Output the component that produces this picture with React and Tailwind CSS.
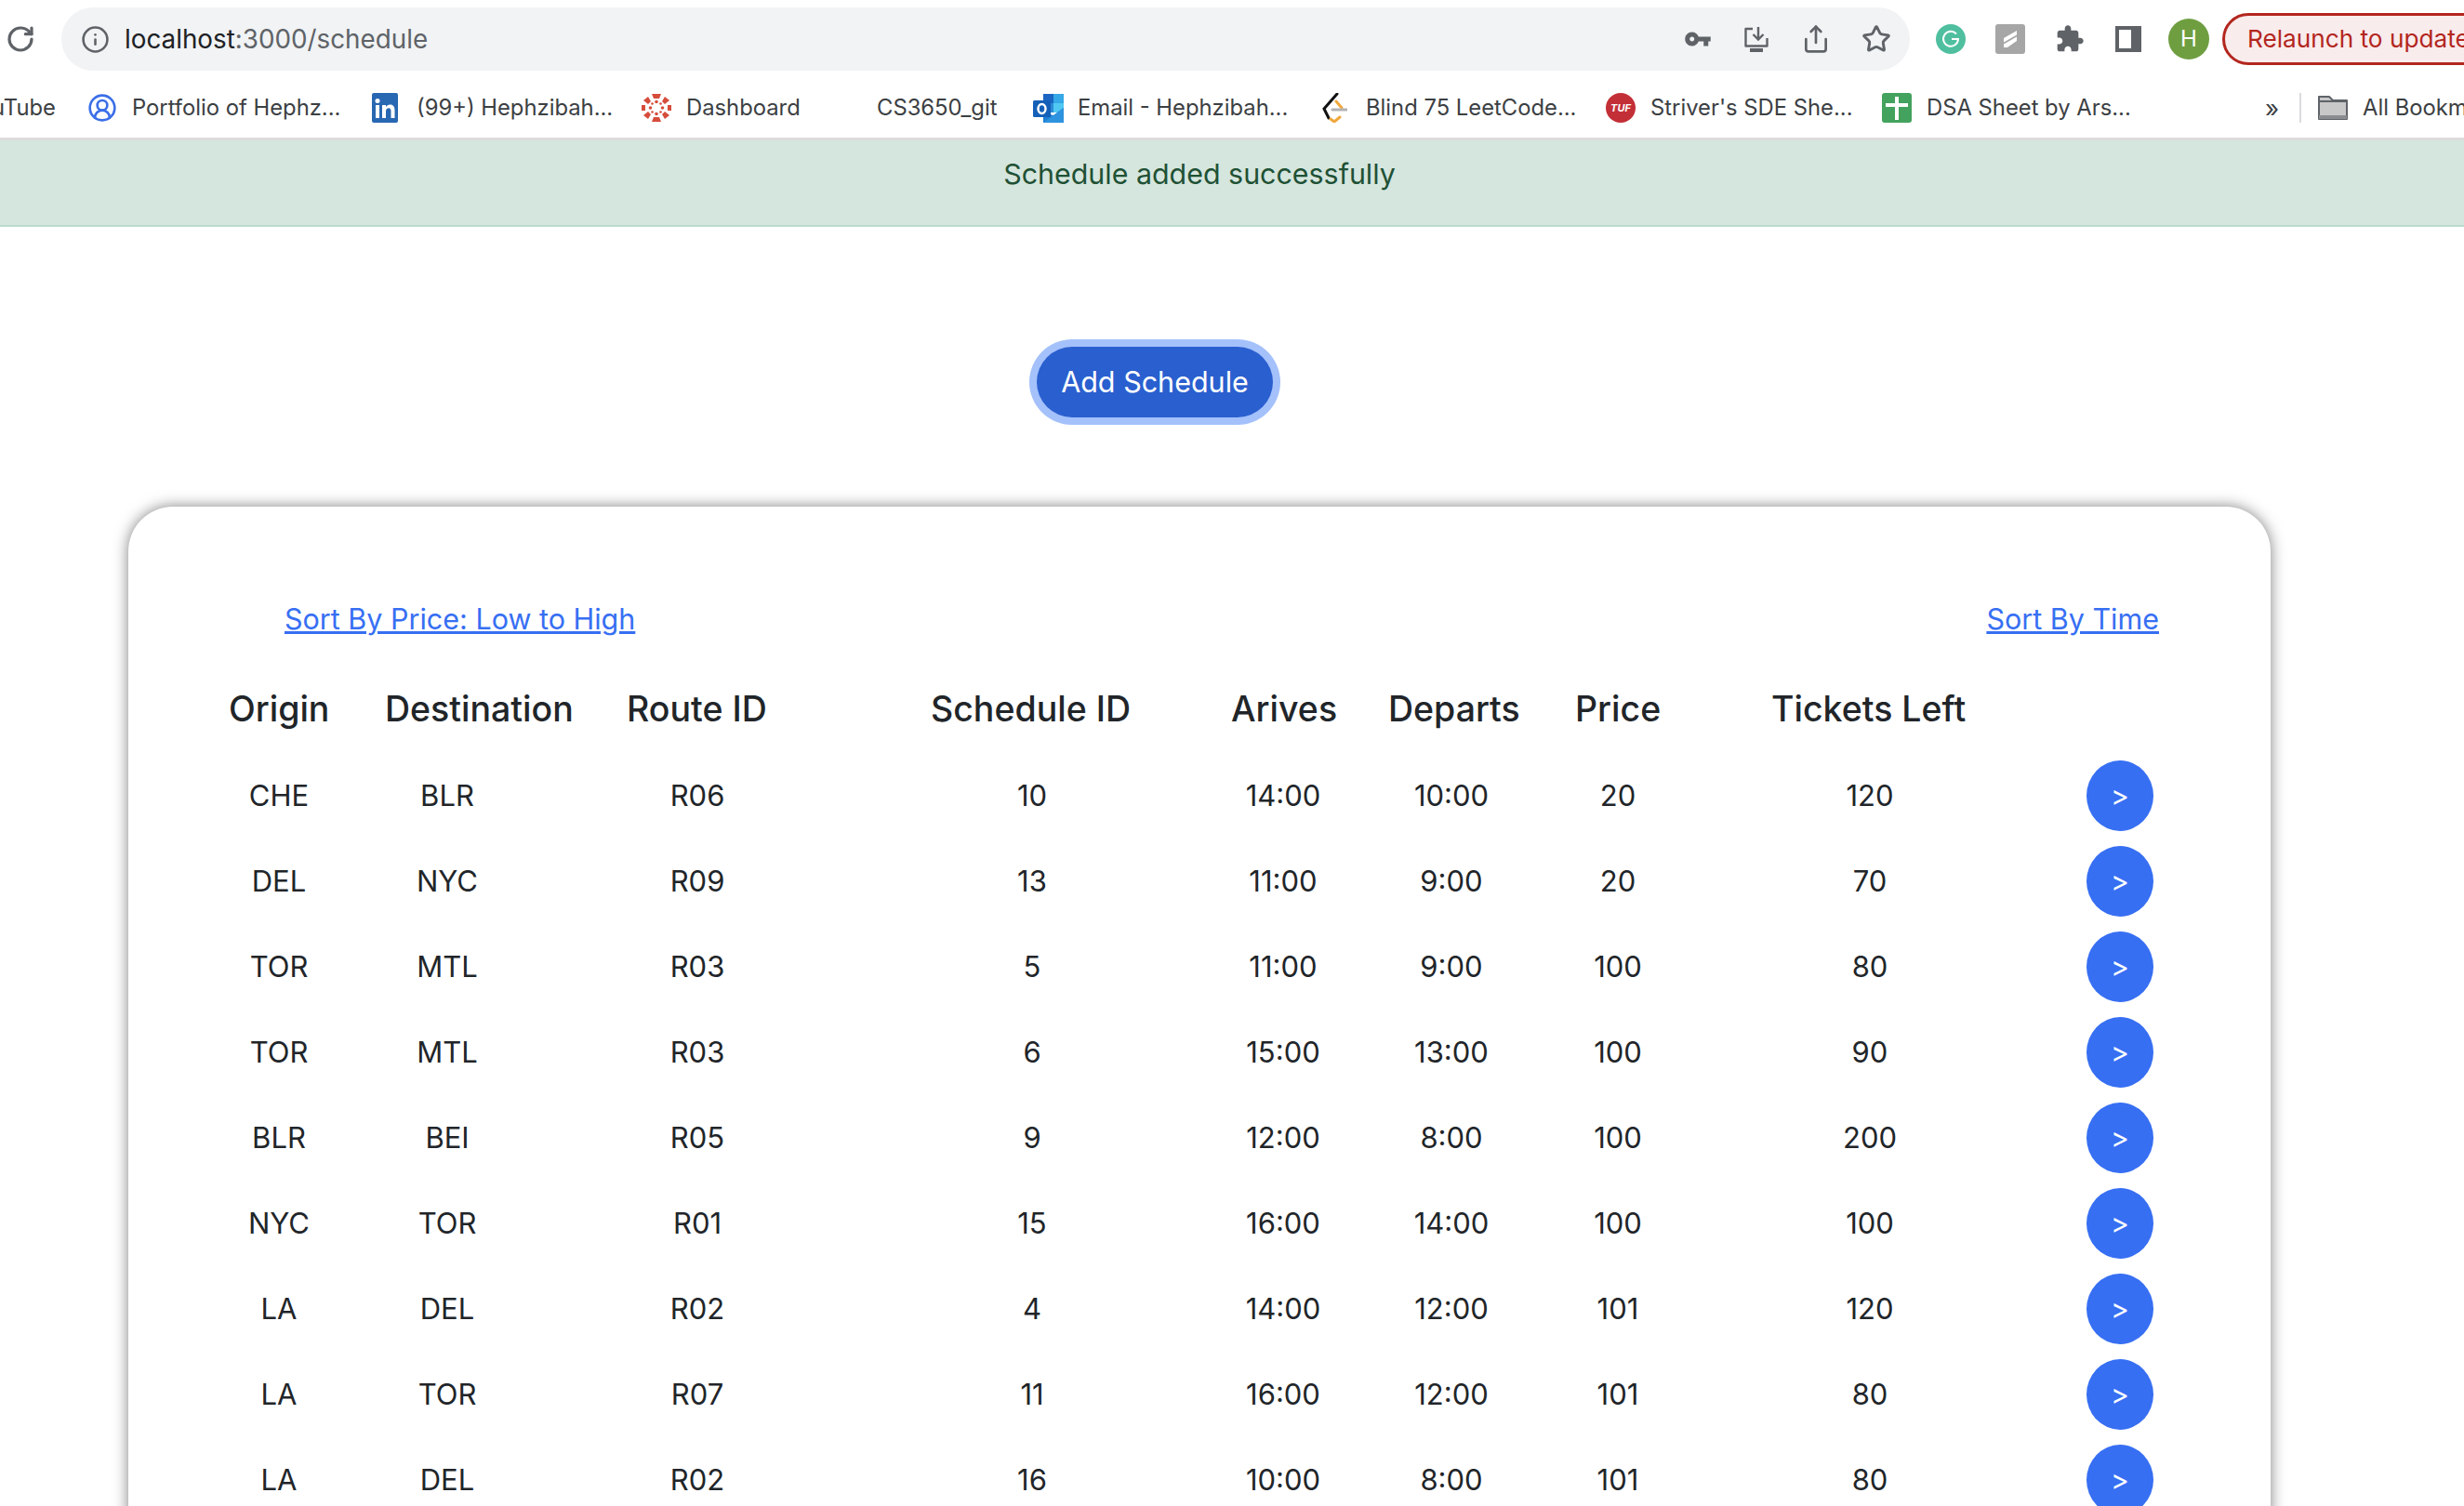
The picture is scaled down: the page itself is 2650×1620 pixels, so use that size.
import React from 'react';
import { RotateCw, Info, Star, Share, CircleUserRound } from 'lucide-react';

const schedules = [
    ['CHE', 'BLR', 'R06', '10', '14:00', '10:00', '20', '120'],
    ['DEL', 'NYC', 'R09', '13', '11:00', '9:00', '20', '70'],
    ['TOR', 'MTL', 'R03', '5', '11:00', '9:00', '100', '80'],
    ['TOR', 'MTL', 'R03', '6', '15:00', '13:00', '100', '90'],
    ['BLR', 'BEI', 'R05', '9', '12:00', '8:00', '100', '200'],
    ['NYC', 'TOR', 'R01', '15', '16:00', '14:00', '100', '100'],
    ['LA', 'DEL', 'R02', '4', '14:00', '12:00', '101', '120'],
    ['LA', 'TOR', 'R07', '11', '16:00', '12:00', '101', '80'],
    ['LA', 'DEL', 'R02', '16', '10:00', '8:00', '101', '80'],
];

const headers = [
    ['Origin', 'w-[168px]'],
    ['Destination', 'w-[260px]'],
    ['Route ID', 'w-[327px]'],
    ['Schedule ID', 'w-[323px]'],
    ['Arives', 'w-[169px]'],
    ['Departs', 'w-[201px]'],
    ['Price', 'w-[211px]'],
    ['Tickets Left', 'w-[220px]'],
];

const gridCols = 'grid grid-cols-[162px_200px_338px_382px_158px_204px_154px_388px_150px] items-center';

const KeyIcon = () => (
    <svg width="30" height="30" viewBox="0 0 24 24" fill="#5f6368">
        <path d="M12.65 10C11.83 7.67 9.61 6 7 6c-3.31 0-6 2.69-6 6s2.69 6 6 6c2.61 0 4.83-1.67 5.65-4H17v4h4v-4h2v-4H12.65zM7 14c-1.1 0-2-.9-2-2s.9-2 2-2 2 .9 2 2-.9 2-2 2z" />
    </svg>
);

const InstallIcon = () => (
    <svg width="30" height="30" viewBox="0 0 30 30" fill="none" stroke="#5f6368" strokeWidth="2.4">
        <path d="M11 4H3.500v18.500h23V14" strokeLinejoin="round" />
        <path d="M17 2v13M11.500 10l5.500 5.500 5.500-5.500" />
        <path d="M8 27h14" strokeWidth="4" />
    </svg>
);

const PuzzleIcon = () => (
    <svg width="32" height="32" viewBox="0 0 24 24" fill="#5f6368">
        <path d="M20.5 11H19V7c0-1.1-.9-2-2-2h-4V3.5C13 2.12 11.88 1 10.5 1S8 2.12 8 3.5V5H4c-1.1 0-1.99.9-1.99 2v3.8H3.5c1.49 0 2.7 1.21 2.7 2.7s-1.21 2.7-2.7 2.7H2V20c0 1.1.9 2 2 2h3.8v-1.5c0-1.49 1.21-2.7 2.7-2.7 1.49 0 2.7 1.21 2.7 2.7V22H17c1.1 0 2-.9 2-2v-4h1.5c1.38 0 2.5-1.12 2.5-2.5S21.88 11 20.5 11z" />
    </svg>
);

const GrammarlyIcon = () => (
    <svg width="32" height="32" viewBox="0 0 32 32">
        <circle cx="16" cy="16" r="16" fill="#4fbf9f" />
        <path d="M22 10.500A8 8 0 1 0 24 16h-7" fill="none" stroke="#fff" strokeWidth="2" />
    </svg>
);

const SlashIcon = () => (
    <svg width="32" height="32" viewBox="0 0 32 32">
        <rect width="32" height="32" rx="3" fill="#a6a6a6" />
        <path d="M9 15 23 7v4.500L9 19.500zM9 21.500 23 13.500V18L13 25 9 25z" fill="#fff" />
    </svg>
);

const LinkedinIcon = () => (
    <svg width="28" height="32" viewBox="0 0 28 32">
        <rect width="28" height="32" rx="2" fill="#2867b2" />
        <rect x="4" y="13" width="4" height="14" fill="#fff" />
        <circle cx="6" cy="8.500" r="2.500" fill="#fff" />
        <path d="M11 13h4v2c1-1.500 2.500-2.400 4.500-2.400 3.500 0 5 2.400 5 6V27h-4v-7.500c0-2-.7-3.300-2.500-3.300S15 17.500 15 19.500V27h-4z" fill="#fff" />
    </svg>
);

const CanvasIcon = () => (
    <svg width="32" height="32" viewBox="0 0 32 32" fill="#d64c3b">
        <path d="M11 1h10l-2 5h-6zM11 31h10l-2-5h-6z" />
        <path d="M2 8l5-4 3 5-3 3zM30 8l-5-4-3 5 3 3zM2 24l5 4 3-5-3-3zM30 24l-5 4-3-5 3-3z" />
        <rect x="0" y="13" width="4" height="6" />
        <rect x="28" y="13" width="4" height="6" />
        <circle cx="9.500" cy="16" r="1.800" />
        <circle cx="22.500" cy="16" r="1.800" />
        <circle cx="16" cy="9.500" r="1.800" />
        <circle cx="16" cy="22.500" r="1.800" />
        <circle cx="11.500" cy="11.500" r="1.300" />
        <circle cx="20.500" cy="11.500" r="1.300" />
        <circle cx="11.500" cy="20.500" r="1.300" />
        <circle cx="20.500" cy="20.500" r="1.300" />
    </svg>
);

const OutlookIcon = () => (
    <svg width="34" height="32" viewBox="0 0 34 32">
        <rect x="11" y="1" width="22" height="10" fill="#1a66c2" />
        <rect x="22" y="1" width="11" height="10" fill="#35a8e8" />
        <rect x="11" y="11" width="11" height="10" fill="#2a8bd8" />
        <rect x="22" y="11" width="11" height="10" fill="#50c8f2" />
        <path d="M11 21l11 3 11-8v16H11z" fill="#1f7fd4" />
        <path d="M11 32l22-16v16z" fill="#2e93de" />
        <rect x="0" y="8" width="19" height="18" rx="1.500" fill="#1460b8" />
        <ellipse cx="9.500" cy="17" rx="4" ry="5" fill="none" stroke="#fff" strokeWidth="2.500" />
    </svg>
);

const LeetcodeIcon = () => (
    <svg width="28" height="32" viewBox="0 0 28 32" fill="none" strokeLinecap="round">
        <path d="M17 1 3 17l5 10" stroke="#111" strokeWidth="3" />
        <path d="M16 9l6 7M10 28l4 3 6-5" stroke="#f0a83c" strokeWidth="3" />
        <path d="M12 18h15" stroke="#b3b3b3" strokeWidth="3" />
    </svg>
);

const TufIcon = () => (
    <div className="w-[32px] h-[32px] rounded-full bg-[#c32f37] flex items-center justify-center text-white text-[11px] font-bold italic">TUF</div>
);

const SheetIcon = () => (
    <svg width="32" height="32" viewBox="0 0 32 32">
        <rect width="32" height="32" rx="3" fill="#43a25d" />
        <path d="M14 4h4v7h10v4H18v14h-4V15H4v-4h10z" fill="#fff" />
    </svg>
);

const FolderIcon = () => (
    <svg width="32" height="26" viewBox="0 0 32 26">
        <path d="M1 25V1h11l4 4h15v20z" fill="#c8c8c8" stroke="#5f6368" strokeWidth="2" strokeLinejoin="round" />
        <path d="M1 6h30" stroke="#5f6368" strokeWidth="2" />
        <path d="M1 21h30v4H1z" fill="#8a8c8f" />
    </svg>
);

const Bookmark = ({ icon, label, className }) => (
    <div className={`flex items-center shrink-0 ${className}`}>
        <div className="w-[48px] h-[32px] shrink-0 flex items-center">{icon}</div>
        <span className="whitespace-nowrap">{label}</span>
    </div>
);

const App = () => {
    return (
        <div className="w-[2650px] h-[1620px] overflow-hidden bg-white font-['Inter',sans-serif] text-[#212529]">
            <div className="h-[84px] flex items-center">
                <div className="w-[66px] shrink-0 flex justify-center pr-[22px]">
                    <RotateCw size={32} color="#5f6368" strokeWidth={2.4} />
                </div>
                <div className="w-[1988px] h-[68px] shrink-0 rounded-full bg-[#f1f3f4] flex items-center pl-[21px] pr-[20px]">
                    <Info size={31} color="#5f6368" strokeWidth={2} />
                    <div className="ml-[16px] pt-[1px] text-[27.8px] text-[#5f6368] whitespace-nowrap"><span className="text-[#202124]">localhost</span>:3000/schedule</div>
                    <div className="ml-auto flex items-center gap-[33px]">
                        <KeyIcon />
                        <InstallIcon />
                        <Share size={32} color="#5f6368" strokeWidth={2} />
                        <Star size={32} color="#5f6368" strokeWidth={2.2} />
                    </div>
                </div>
                <div className="ml-[28px] flex items-center gap-[32px] shrink-0">
                    <GrammarlyIcon />
                    <SlashIcon />
                    <PuzzleIcon />
                    <div className="w-[28px] h-[28px] border-[4px] border-r-[11px] border-[#5f6368] ml-[1px]" />
                </div>
                <div className="ml-[29px] w-[44px] h-[44px] shrink-0 rounded-full bg-[#6f9e41] flex items-center justify-center text-white text-[24px]">H</div>
                <div className="ml-[14px] h-[56px] w-[320px] shrink-0 rounded-full border-[3px] border-[#b3261e] bg-[#f9ecec] text-[#b3261e] text-[26.2px] flex items-center pl-[24px] whitespace-nowrap">Relaunch to update</div>
            </div>

            <div className="h-[67px] border-b-[3px] border-[#dcdcdc] flex items-center text-[23.8px] text-[#3c4043] overflow-hidden">
                <div className="w-[94px] shrink-0 overflow-hidden flex justify-end pr-[34px]"><span className="whitespace-nowrap">YouTube</span></div>
                <Bookmark className="w-[306px]" icon={<CircleUserRound size={32} color="#3b6fe8" strokeWidth={2} />} label="Portfolio of Hephz..." />
                <Bookmark className="w-[290px]" icon={<LinkedinIcon />} label="(99+) Hephzibah..." />
                <Bookmark className="w-[205px]" icon={<CanvasIcon />} label="Dashboard" />
                <Bookmark className="w-[216px]" icon={null} label="CS3650_git" />
                <Bookmark className="w-[310px]" icon={<OutlookIcon />} label="Email - Hephzibah..." />
                <Bookmark className="w-[306px]" icon={<LeetcodeIcon />} label="Blind 75 LeetCode..." />
                <Bookmark className="w-[297px]" icon={<TufIcon />} label="Striver's SDE She..." />
                <Bookmark className="w-[412px]" icon={<SheetIcon />} label="DSA Sheet by Ars..." />
                <span className="w-[37px] shrink-0 text-[26px]">»</span>
                <div className="w-[2px] h-[32px] bg-[#dadce0] shrink-0" />
                <div className="ml-[18px] w-[48px] shrink-0"><FolderIcon /></div>
                <span className="whitespace-nowrap">All Bookmarks</span>
            </div>

            <div className="h-[93px] border-b-2 border-[#badbcc] bg-[#d5e6de] flex justify-center pt-[20px] pr-[70px] text-[30.4px] leading-[32px] text-[#1f5135]">
                Schedule added successfully
            </div>

            <div className="mt-[129px] flex justify-center pr-[166px]">
                <button className="w-[254px] h-[76px] rounded-full bg-[#2a5fcf] ring-8 ring-[#a4c1fb] text-white text-[30.5px]">Add Schedule</button>
            </div>

            <div className="mt-[96px] ml-[138px] w-[2304px] rounded-[48px] bg-white shadow-[0_0_16px_rgba(0,0,0,0.5)] pt-[97px] pb-[40px]">
                <div className="flex justify-between pl-[168px] pr-[120px] text-[30.5px] leading-[48px] text-[#376ff3]">
                    <a className="underline">Sort By Price: Low to High</a>
                    <a className="underline">Sort By Time</a>
                </div>

                <div className="flex items-center mt-[43px] ml-[108px] h-[60px] text-[37.5px] font-medium whitespace-nowrap">
                    {headers.map(([label, width]) => (
                        <div key={label} className={`shrink-0 ${width}`}>{label}</div>
                    ))}
                </div>

                <div className="mt-[25px] ml-[81px] flex flex-col gap-4">
                    {schedules.map((row, i) => (
                        <div key={i} className={`${gridCols} h-[76px] text-[31px] text-center`}>
                            {row.map((cell, j) => (
                                <div key={j}>{cell}</div>
                            ))}
                            <div className="flex justify-center">
                                <button className="w-[72px] h-[76px] rounded-[50%] bg-[#376ff3] text-white text-[30px]">&gt;</button>
                            </div>
                        </div>
                    ))}
                </div>
            </div>
        </div>
    );
};

export default App;
